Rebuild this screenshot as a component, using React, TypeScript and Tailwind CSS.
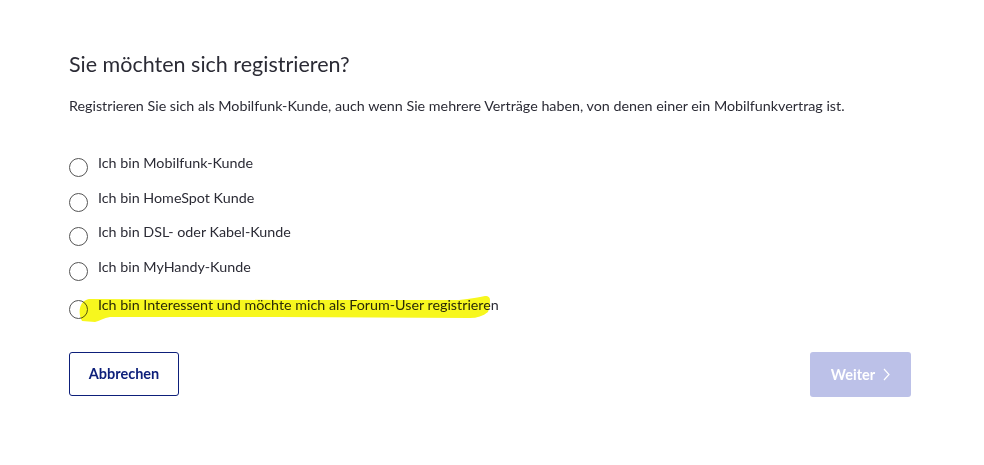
import { useState } from "react";

const options = [
  "Ich bin Mobilfunk-Kunde",
  "Ich bin HomeSpot Kunde",
  "Ich bin DSL- oder Kabel-Kunde",
  "Ich bin MyHandy-Kunde",
  "Ich bin Interessent und möchte mich als Forum-User registrieren",
];

function Radio({ label, checked, onClick, highlight }: { label: string; checked: boolean; onClick: () => void; highlight?: boolean }) {
  return (
    <label className="relative flex items-start gap-[10px] cursor-pointer" onClick={onClick}>
      <span className="mt-[5px] w-[19px] h-[19px] shrink-0 rounded-full border border-[#555] bg-white flex items-center justify-center">
        {checked && <span className="w-[9px] h-[9px] rounded-full bg-[#0d1f7a]" />}
      </span>
      <span className="relative text-[14.3px] leading-[20px] text-[#2b2b35]">{label}</span>
      {highlight && (
        <svg
          className="absolute left-[10px] top-[1px] pointer-events-none mix-blend-multiply"
          width="414"
          height="29"
          viewBox="0 0 414 29"
        >
          <path
            d="M1 12 C2 7 5 4 10 3 L200 4 L380 4 C392 3 400 1 406 0 C410 0 411 2 411 4 C411 9 410 13 409 16 C404 20 398 22 391 22 L200 21 L31 21 C25 22 20 25 16 26 L3 25 C1 21 0 16 1 12 Z"
            fill="#f7f71e"
          />
        </svg>
      )}
    </label>
  );
}

export default function App() {
  const [selected, setSelected] = useState<number | null>(null);

  return (
    <div className="w-[984px] h-[465px] bg-white font-['Lato',sans-serif] pl-[69px] pt-[51px]">
      <div className="w-[842px]">
        <h1 className="text-[21.5px] leading-[26px] text-[#2b2b35]">Sie möchten sich registrieren?</h1>
        <p className="mt-[19px] text-[14.3px] leading-[20px] text-[#2b2b35]">
          Registrieren Sie sich als Mobilfunk-Kunde, auch wenn Sie mehrere Verträge haben, von denen einer ein Mobilfunkvertrag ist.
        </p>

        <div className="mt-[37px] flex flex-col gap-[10.5px]">
          {options.slice(0, 4).map((o, i) => (
            <Radio key={o} label={o} checked={selected === i} onClick={() => setSelected(i)} />
          ))}
          <div className="mt-[4px]">
            <Radio label={options[4]} checked={selected === 4} onClick={() => setSelected(4)} highlight />
          </div>
        </div>

        <div className="mt-[33px] flex justify-between">
          <button className="w-[110px] h-[44px] rounded-[3px] border border-[#0d1f7a] text-[#0d1f7a] text-[14.5px] font-bold bg-white">
            Abbrechen
          </button>
          <button
            disabled={selected === null}
            className="w-[101px] h-[45px] rounded-[3px] bg-[#bcc1e8] text-white text-[14.5px] font-bold flex items-center justify-center gap-[8px]"
          >
            Weiter
            <svg width="7" height="13" viewBox="0 0 7 13" fill="none" stroke="white" strokeWidth="1.2">
              <path d="M1 1 L6 6.5 L1 12" />
            </svg>
          </button>
        </div>
      </div>
    </div>
  );
}
